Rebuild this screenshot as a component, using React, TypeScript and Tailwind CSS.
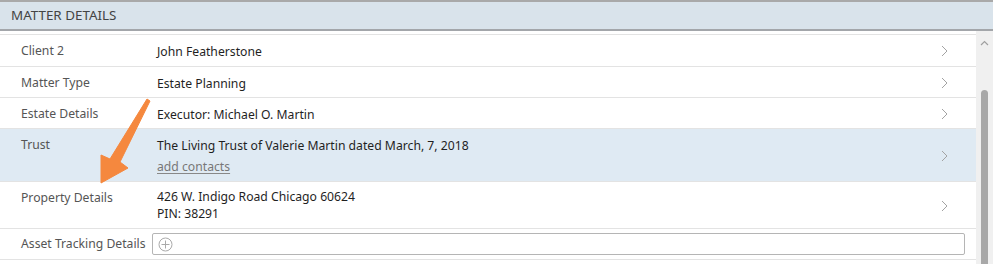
type Row = {
  label: string;
  lines: string[];
  link?: string;
  active?: boolean;
  h: string;
};

const rows: Row[] = [
  { label: "Client 2", lines: ["John Featherstone"], h: "h-[32px]" },
  { label: "Matter Type", lines: ["Estate Planning"], h: "h-[31px]" },
  { label: "Estate Details", lines: ["Executor: Michael O. Martin"], h: "h-[31px]" },
  {
    label: "Trust",
    lines: ["The Living Trust of Valerie Martin dated March, 7, 2018"],
    link: "add contacts",
    active: true,
    h: "h-[53px]",
  },
  {
    label: "Property Details",
    lines: ["426 W. Indigo Road Chicago 60624", "PIN: 38291"],
    h: "h-[47px]",
  },
];

function Chevron() {
  return (
    <svg width="7" height="12" viewBox="0 0 7 12">
      <path d="M1 1l5 5-5 5" fill="none" stroke="#a3a3a3" strokeWidth="1" />
    </svg>
  );
}

function DetailRow({ row }: { row: Row }) {
  return (
    <div
      className={`flex items-start border-b border-[#e3e3e3] ${row.h} ${
        row.active ? "bg-[#dfeaf3]" : "bg-white"
      }`}
    >
      <div className="w-[157px] shrink-0 pl-[21px] pt-[7px] text-[#555]">{row.label}</div>
      <div className={`flex-1 ${row.lines.length > 1 ? "pt-[6px]" : "pt-[8px]"} text-[#1f1f1f] leading-[17px]`}>
        {row.lines.map((l) => (
          <div key={l}>{l}</div>
        ))}
        {row.link && (
          <div className="mt-[4px] text-[#777] underline underline-offset-2 decoration-[#888]">{row.link}</div>
        )}
      </div>
      <div className="w-[40px] self-center flex justify-start pl-[5px] pt-[1px]">
        <Chevron />
      </div>
    </div>
  );
}

export default function App() {
  return (
    <div
      className="relative w-[993px] h-[264px] overflow-hidden bg-white text-[12.2px]"
      style={{ fontFamily: "'Noto Sans', 'Open Sans', sans-serif" }}
    >
      <div className="h-[31px] border-t-2 border-b-2 border-t-[#a9a9a9] border-b-[#a3a6aa] bg-[#d9e3eb] flex items-center pl-[11px] text-[13.4px] text-[#444]">
        MATTER DETAILS
      </div>
      <div className="flex">
        <div className="w-[976px] pt-[3px]">
          <div className="border-t border-[#e3e3e3]">
            {rows.map((r) => (
              <DetailRow key={r.label} row={r} />
            ))}
            <div className="flex items-center h-[31px] border-b border-[#e3e3e3]">
              <div className="w-[152px] shrink-0 pl-[21px] text-[#555] whitespace-nowrap">Asset Tracking Details</div>
              <div className="w-[813px] h-[22px] border border-[#b5b5b5] rounded-[2px] flex items-center pl-[5px]">
                <svg width="15" height="15" viewBox="0 0 15 15">
                  <circle cx="7.5" cy="7.5" r="6.5" fill="none" stroke="#aaa" strokeWidth="1" />
                  <path d="M7.5 3.5v8M3.5 7.5h8" stroke="#aaa" strokeWidth="1" />
                </svg>
              </div>
            </div>
          </div>
        </div>
        <div className="w-[17px] h-[233px] bg-[#f0f0f0] flex flex-col items-center">
          <svg width="9" height="6" viewBox="0 0 9 6" className="mt-[9px]">
            <path d="M1 5l3.5-3.5L8 5" fill="none" stroke="#a0a0a0" strokeWidth="1.2" />
          </svg>
          <div className="mt-[44px] w-[7px] flex-1 rounded-t-[4px] bg-[#a8a8a8]" />
        </div>
      </div>
      <svg className="absolute left-0 top-0 pointer-events-none" width="993" height="264">
        <path
          d="M147 99 L150 101 L120 162 L128 168 L101 183 L101 155 L110 159 Z"
          fill="#f5883e"
          stroke="#f5883e"
          strokeWidth="1"
          strokeLinejoin="round"
        />
      </svg>
    </div>
  );
}
